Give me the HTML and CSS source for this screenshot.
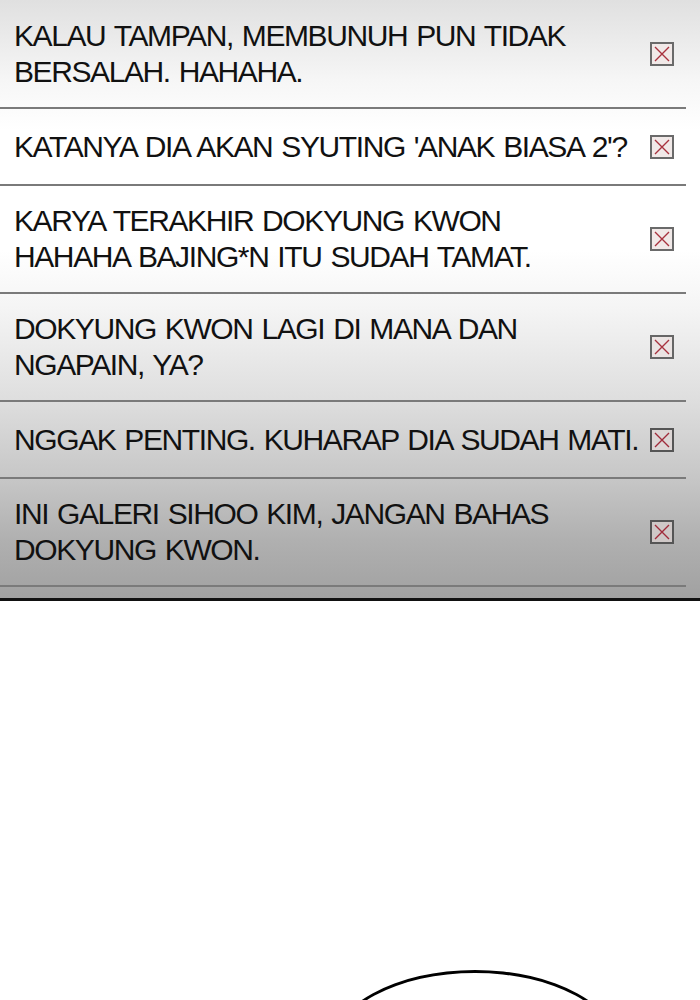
FILE: index.html
```html
<!DOCTYPE html>
<html>
<head>
<meta charset="utf-8">
<link rel="stylesheet" href="styles.css">
</head>
<body>
<div class="page">
  <div class="panel">
    <ul class="list">
      <li class="row two first"><span class="text">KALAU TAMPAN, MEMBUNUH PUN TIDAK<br>BERSALAH. HAHAHA.</span><span class="close"><svg viewBox="0 0 24 24" width="24" height="24"><rect x="1" y="1" width="22" height="22" fill="#f1e9e8" stroke="#6a6a6a" stroke-width="2"/><path d="M5 5 L19 19 M19 5 L5 19" stroke="#a8323e" stroke-width="1.4" fill="none"/></svg></span></li>
      <li class="row one"><span class="text">KATANYA DIA AKAN SYUTING 'ANAK BIASA 2'?</span><span class="close"><svg viewBox="0 0 24 24" width="24" height="24"><rect x="1" y="1" width="22" height="22" fill="#f1e9e8" stroke="#6a6a6a" stroke-width="2"/><path d="M5 5 L19 19 M19 5 L5 19" stroke="#a8323e" stroke-width="1.4" fill="none"/></svg></span></li>
      <li class="row two"><span class="text">KARYA TERAKHIR DOKYUNG KWON<br>HAHAHA BAJING*N ITU SUDAH TAMAT.</span><span class="close"><svg viewBox="0 0 24 24" width="24" height="24"><rect x="1" y="1" width="22" height="22" fill="#f1e9e8" stroke="#6a6a6a" stroke-width="2"/><path d="M5 5 L19 19 M19 5 L5 19" stroke="#a8323e" stroke-width="1.4" fill="none"/></svg></span></li>
      <li class="row two"><span class="text">DOKYUNG KWON LAGI DI MANA DAN<br>NGAPAIN, YA?</span><span class="close"><svg viewBox="0 0 24 24" width="24" height="24"><rect x="1" y="1" width="22" height="22" fill="#ebe4e3" stroke="#666" stroke-width="2"/><path d="M5 5 L19 19 M19 5 L5 19" stroke="#a8323e" stroke-width="1.4" fill="none"/></svg></span></li>
      <li class="row one"><span class="text">NGGAK PENTING. KUHARAP DIA SUDAH MATI.</span><span class="close"><svg viewBox="0 0 24 24" width="24" height="24"><rect x="1" y="1" width="22" height="22" fill="#ddd6d5" stroke="#555" stroke-width="2"/><path d="M5 5 L19 19 M19 5 L5 19" stroke="#a02a3a" stroke-width="1.4" fill="none"/></svg></span></li>
      <li class="row two"><span class="text">INI GALERI SIHOO KIM, JANGAN BAHAS<br>DOKYUNG KWON.</span><span class="close"><svg viewBox="0 0 24 24" width="24" height="24"><rect x="1" y="1" width="22" height="22" fill="#cfc8c7" stroke="#555" stroke-width="2"/><path d="M5 5 L19 19 M19 5 L5 19" stroke="#a02a3a" stroke-width="1.4" fill="none"/></svg></span></li>
    </ul>
  </div>
  <div class="below">
    <div class="bubble"></div>
  </div>
</div>
</body>
</html>
```
FILE: styles.css
```css
html, body {
  margin: 0;
  padding: 0;
  background: #ffffff;
}
.page {
  width: 700px;
  height: 1000px;
  overflow: hidden;
}
.panel {
  background: linear-gradient(to bottom, #e0e0e0 0px, #f6f6f6 80px, #ffffff 130px, #ffffff 250px, #f4f4f4 310px, #dedede 400px, #c6c6c6 480px, #b0b0b0 540px, #a1a1a1 598px);
  padding-bottom: 11px;
  border-bottom: 3px solid #111;
}
.list {
  list-style: none;
  margin: 0;
  padding: 0;
  width: 686px;
}
.row {
  display: flex;
  align-items: center;
  gap: 8px;
  border-bottom: 2px solid #7a7a7a;
  padding: 0 12px 0 14px;
  font-family: "Liberation Sans", Arial, sans-serif;
  font-size: 30px;
  line-height: 36px;
  letter-spacing: -1.4px;
  word-spacing: 2px;
  color: #111;
}
.row.two {
  height: 106px;
}
.row.two.first {
  height: 107px;
}
.row.one {
  height: 75px;
}
.text {
  display: block;
  flex: 1 1 auto;
  min-width: 0;
  white-space: nowrap;
}
.close {
  display: flex;
  flex: none;
  width: 24px;
  height: 24px;
}
.below {
  display: flex;
  padding-top: 369px;
  padding-left: 330px;
}
.bubble {
  flex: none;
  box-sizing: border-box;
  width: 290px;
  height: 160px;
  border: 3px solid #000;
  border-radius: 50%;
}
```
